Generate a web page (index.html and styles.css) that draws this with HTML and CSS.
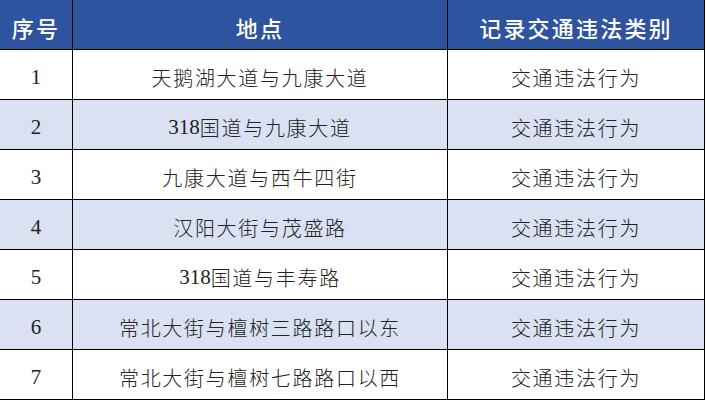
FILE: index.html
```html
<!DOCTYPE html>
<html lang="zh-CN">
<head>
<meta charset="utf-8">
<title>交通违法记录</title>
<link rel="stylesheet" href="styles.css">
</head>
<body>
<div class="table" role="table">
  <div class="row head" role="row">
    <div class="cell" role="columnheader">序号</div>
    <div class="cell" role="columnheader">地点</div>
    <div class="cell" role="columnheader">记录交通违法类别</div>
  </div>
  <div class="row" role="row">
    <div class="cell num">1</div>
    <div class="cell">天鹅湖大道与九康大道</div>
    <div class="cell">交通违法行为</div>
  </div>
  <div class="row alt" role="row">
    <div class="cell num">2</div>
    <div class="cell"><span class="digits">318</span>国道与九康大道</div>
    <div class="cell">交通违法行为</div>
  </div>
  <div class="row" role="row">
    <div class="cell num">3</div>
    <div class="cell">九康大道与西牛四街</div>
    <div class="cell">交通违法行为</div>
  </div>
  <div class="row alt" role="row">
    <div class="cell num">4</div>
    <div class="cell">汉阳大街与茂盛路</div>
    <div class="cell">交通违法行为</div>
  </div>
  <div class="row" role="row">
    <div class="cell num">5</div>
    <div class="cell"><span class="digits">318</span>国道与丰寿路</div>
    <div class="cell">交通违法行为</div>
  </div>
  <div class="row alt" role="row">
    <div class="cell num">6</div>
    <div class="cell">常北大街与檀树三路路口以东</div>
    <div class="cell">交通违法行为</div>
  </div>
  <div class="row" role="row">
    <div class="cell num">7</div>
    <div class="cell">常北大街与檀树七路路口以西</div>
    <div class="cell">交通违法行为</div>
  </div>
</div>
</body>
</html>
```
FILE: styles.css
```css
html, body {
  margin: 0;
  padding: 0;
  background: #ffffff;
}

.table {
  display: grid;
  grid-template-columns: 72px 374px 256px;
  grid-auto-rows: 49px;
  gap: 1px;
  width: 704px;
  padding: 0 1px 1px 0;
  background: #000000;
  font-family: "Liberation Serif", "Noto Sans CJK SC", serif;
}

.row {
  display: contents;
}

.cell {
  display: flex;
  align-items: center;
  justify-content: center;
  padding-top: 5px;
  box-sizing: border-box;
  background: #ffffff;
  color: #222222;
  font-size: 20px;
  font-weight: 300;
  letter-spacing: 1.7px;
  white-space: nowrap;
}

.row.alt .cell {
  background: #d9e1f2;
}

.row.head .cell {
  background: #2f549f;
  color: #ffffff;
  font-family: "Noto Sans CJK SC", sans-serif;
  font-size: 22px;
  font-weight: 500;
  letter-spacing: 2.2px;
  padding-top: 4px;
}

.cell.num {
  font-size: 21px;
  font-weight: 400;
  letter-spacing: 0;
}

.digits {
  letter-spacing: 0;
  font-size: 21px;
  font-weight: 400;
}
```
